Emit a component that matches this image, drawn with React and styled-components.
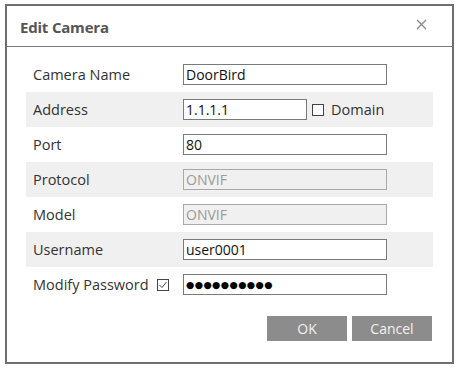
import React from "react";
import styled, { createGlobalStyle } from "styled-components";

const Global = createGlobalStyle`
  html, body { margin: 0; padding: 0; background: #fff; }
  body { font-family: "Open Sans", "Noto Sans", sans-serif; }
`;

const Dialog = styled.div`
  box-sizing: border-box;
  margin: 4px 0 0 5px;
  width: 449px;
  height: 360px;
  border: 2px solid #6e6e6e;
  background: #fff;
  display: flex;
  flex-direction: column;
`;

const Header = styled.div`
  box-sizing: border-box;
  height: 41px;
  border-bottom: 1px solid #7a7a7a;
  display: flex;
  align-items: center;
  justify-content: space-between;
  padding: 2px 24px 0 13px;
`;

const Title = styled.div`
  font-size: 15px;
  font-weight: 700;
  color: #555;
  letter-spacing: -0.2px;
`;

const Close = styled.button`
  border: none;
  background: none;
  padding: 0;
  width: 12px;
  height: 12px;
  display: flex;
  margin-top: -4px;
`;

const Body = styled.div`
  padding: 10px 19px 0 19px;
  display: flex;
  flex-direction: column;
`;

const Row = styled.div`
  height: 35px;
  display: flex;
  align-items: center;
  background: ${(p) => (p.$shaded ? "#f0f0f0" : "transparent")};
  padding-left: 7px;
`;

const Label = styled.div`
  width: 150px;
  font-size: 14.5px;
  color: #333;
  display: flex;
  align-items: center;
  gap: 8px;
`;

const Input = styled.div`
  box-sizing: border-box;
  width: ${(p) => p.$w || 204}px;
  height: 21px;
  border: 1px solid ${(p) => (p.$disabled ? "#a8a8a8" : "#7a7a7a")};
  background: ${(p) => (p.$disabled ? "#f0f0f0" : "#fff")};
  color: ${(p) => (p.$disabled ? "#9a9a9a" : "#111")};
  font-size: 14px;
  padding-left: 2px;
  display: flex;
  align-items: center;
  line-height: 1;
`;

const Dots = styled.span`
  font-family: "DejaVu Sans", sans-serif;
  font-size: 9.5px;
  letter-spacing: 0.4px;
  color: #000;
`;

const CheckLabel = styled.div`
  display: flex;
  align-items: center;
  gap: 7px;
  margin-left: 5px;
  font-size: 14.5px;
  color: #333;
`;

const Footer = styled.div`
  display: flex;
  justify-content: flex-end;
  gap: 5px;
  padding: 14px 20px 0 0;
`;

const Button = styled.button`
  width: 80px;
  height: 25px;
  border: none;
  background: #8c8c8c;
  color: #f2f2f2;
  font-family: "Open Sans", "Noto Sans", sans-serif;
  font-size: 14px;
  padding: 0;
`;

const Box = ({ checked }) => (
  <svg width="12" height="12" viewBox="0 0 12 12">
    <rect x="0.5" y="0.5" width="11" height="11" fill="#fff" stroke="#444" />
    {checked && (
      <path d="M2.5 6 L5 8.5 L9.5 3" fill="none" stroke="#444" strokeWidth="1" />
    )}
  </svg>
);

export default function App() {
  return (
    <>
      <Global />
      <Dialog>
        <Header>
          <Title>Edit Camera</Title>
          <Close aria-label="close">
            <svg width="11" height="11" viewBox="0 0 11 11">
              <path d="M1 1 L10 10 M10 1 L1 10" stroke="#888" strokeWidth="1.3" />
            </svg>
          </Close>
        </Header>
        <Body>
          <Row>
            <Label>Camera Name</Label>
            <Input>DoorBird</Input>
          </Row>
          <Row $shaded>
            <Label>Address</Label>
            <Input $w={124}>1.1.1.1</Input>
            <CheckLabel>
              <Box />
              Domain
            </CheckLabel>
          </Row>
          <Row>
            <Label>Port</Label>
            <Input>80</Input>
          </Row>
          <Row $shaded>
            <Label>Protocol</Label>
            <Input $disabled>ONVIF</Input>
          </Row>
          <Row>
            <Label>Model</Label>
            <Input $disabled>ONVIF</Input>
          </Row>
          <Row $shaded>
            <Label>Username</Label>
            <Input>user0001</Input>
          </Row>
          <Row>
            <Label>
              Modify Password <Box checked />
            </Label>
            <Input>
              <Dots>●●●●●●●●●●</Dots>
            </Input>
          </Row>
        </Body>
        <Footer>
          <Button>OK</Button>
          <Button>Cancel</Button>
        </Footer>
      </Dialog>
    </>
  );
}
